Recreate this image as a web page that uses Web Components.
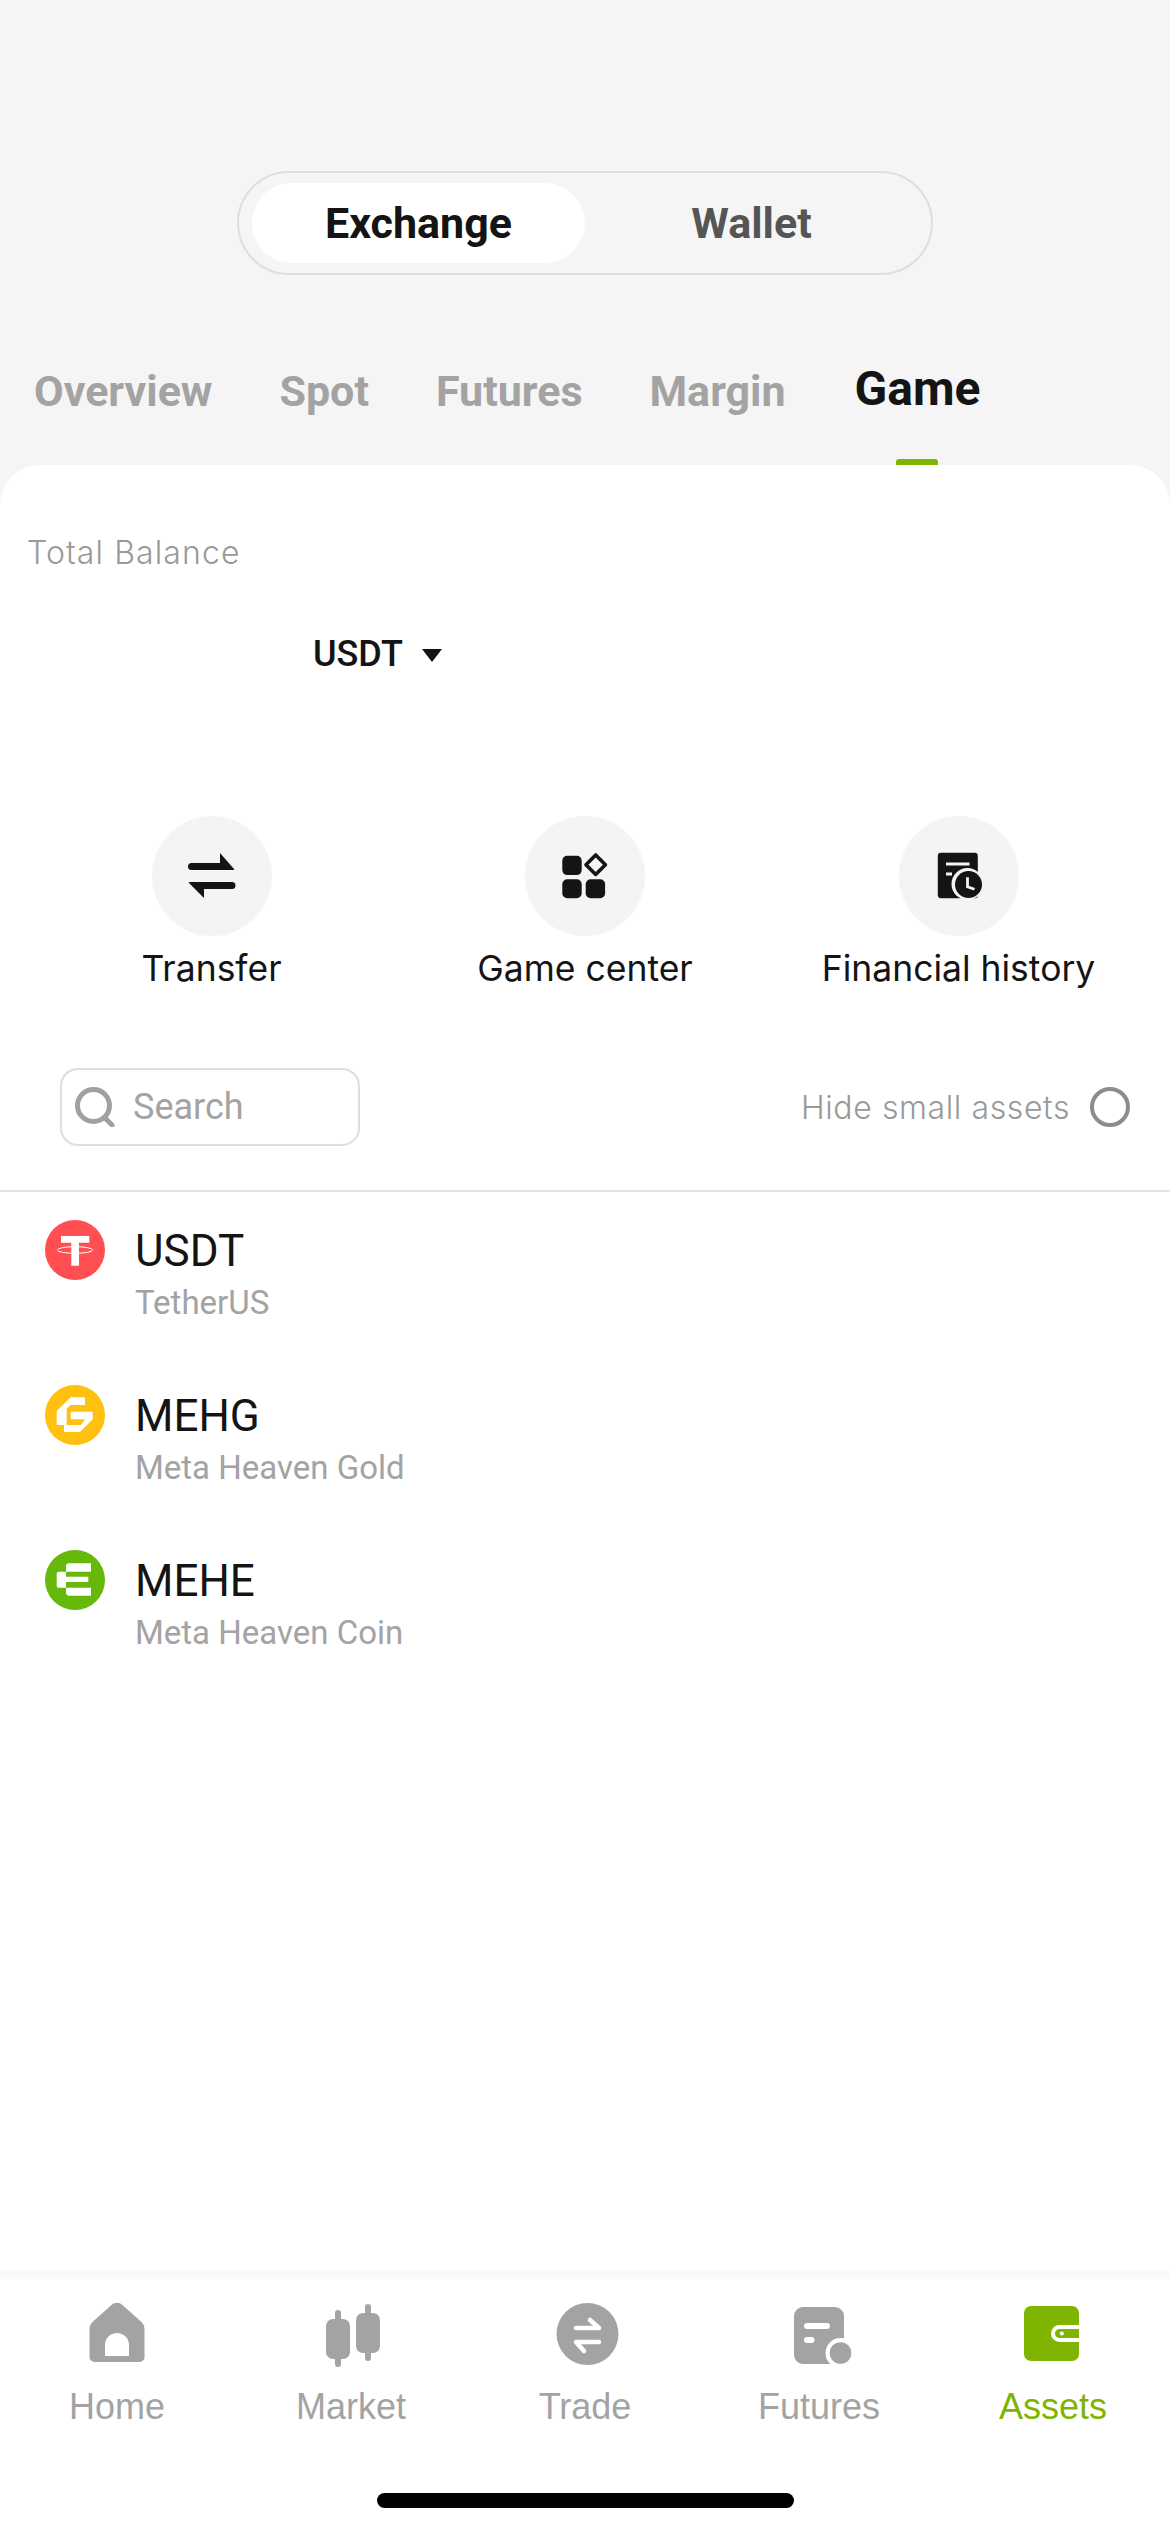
<!doctype html>
<html lang="en">
<head>
<meta charset="utf-8" />
<title>Assets</title>
<style>
  html, body { margin: 0; background: #f5f5f5; }
  body { width: 1170px; height: 2532px; overflow: hidden; font-family: Roboto, "Liberation Sans", sans-serif; }
  app-screen { height: 2532px; }
</style>
</head>
<body>
<template id="app-screen">
  <style>
    :host { display: flex; flex-direction: column; }
    .top { height: 465px; flex: none; display: flex; flex-direction: column; }
    .sheet { flex: 1; background: #fff; border-radius: 40px 40px 0 0; display: flex; flex-direction: column; }
  </style>
  <div class="top"><slot name="top"></slot></div>
  <div class="sheet"><slot></slot></div>
</template>

<template id="seg-switch">
  <style>
    :host { display: flex; width: 696px; height: 104px; box-sizing: border-box; margin: 171px auto 0; border: 2px solid #dedede; border-radius: 52px; padding: 10px 13px; font: 700 43px Roboto, sans-serif; }
    span { flex: 1; display: flex; align-items: center; justify-content: center; color: #555; border-radius: 41px; }
    .on { background: #fff; color: #141414; }
  </style>
  <span class="on">Exchange</span><span>Wallet</span>
</template>

<template id="tab-strip">
  <style>
    :host { display: flex; gap: 67px; padding-left: 34px; margin-top: 84px; height: 106px; font: 700 43px Roboto, sans-serif; color: #a3a3a3; }
    span { position: relative; line-height: 64px; white-space: nowrap; }
    .on { color: #141414; font-size: 48px; line-height: 60px; margin-left: 2px; }
    .on::after { content: ""; position: absolute; left: 50%; bottom: 0; width: 42px; height: 6px; margin-left: -21px; background: #7fb500; border-radius: 3px 3px 0 0; }
  </style>
  <span>Overview</span><span>Spot</span><span>Futures</span><span>Margin</span><span class="on">Game</span>
</template>

<template id="balance-head">
  <style>
    :host { display: block; padding: 69px 27px 0; height: 225px; box-sizing: border-box; }
    .label { font: 300 32px/38px Inter, Roboto, sans-serif; letter-spacing: 1.100px; color: #999; }
    .unit { display: flex; align-items: center; gap: 19px; margin: 61px 0 0 286px; font: 500 36px/42px Roboto, sans-serif; color: #141414; }
    svg { width: 20px; height: 13px; margin-top: 2px; }
  </style>
  <div class="label">Total Balance</div>
  <div class="unit">USDT <svg viewBox="0 0 20 13"><path d="M0 0h20L10 13z" fill="#141414"/></svg></div>
</template>

<template id="action-row">
  <style>
    :host { display: grid; grid-template-columns: repeat(3, 373.5px); justify-content: center; margin-top: 126px; }
  </style>
  <slot></slot>
</template>

<template id="action-item">
  <style>
    :host { display: flex; flex-direction: column; align-items: center; font: 400 35.500px/44px Inter, Roboto, sans-serif; color: #141414; white-space: nowrap; }
    .dot { width: 120px; height: 120px; border-radius: 50%; background: #f4f4f4; display: flex; align-items: center; justify-content: center; margin-bottom: 11px; }
    ::slotted(svg) { width: 60px; height: 60px; }
  </style>
  <div class="dot"><slot name="icon"></slot></div>
  <slot></slot>
</template>

<template id="filter-row">
  <style>
    :host { display: flex; align-items: center; justify-content: space-between; height: 78px; padding: 0 40px 0 60px; margin-top: 77px; margin-bottom: 44px; font: 300 32px Inter, Roboto, sans-serif; letter-spacing: .6px; color: #999; }
    .search { width: 300px; height: 78px; box-sizing: border-box; border: 2px solid #dedede; border-radius: 18px; display: flex; align-items: center; gap: 18px; padding-left: 13px; font: 400 36px Roboto, sans-serif; letter-spacing: 0; color: #a3a3a3; }
    .search svg { width: 40px; height: 40px; flex: none; }
    .hide { display: flex; align-items: center; gap: 20px; }
    .radio { width: 40px; height: 40px; box-sizing: border-box; border: 4px solid #8c8c8c; border-radius: 50%; }
  </style>
  <div class="search">
    <svg viewBox="0 0 40 40" fill="none" stroke="#a0a0a0" stroke-width="5" stroke-linecap="round"><circle cx="18.500" cy="18.500" r="16"/><path d="M31 32l6 6"/></svg>
    <span>Search</span>
  </div>
  <div class="hide"><span>Hide small assets</span><div class="radio"></div></div>
</template>

<template id="asset-list">
  <style>
    :host { display: block; border-top: 2px solid #e4e4e4; padding-top: 28px; }
  </style>
  <slot></slot>
</template>

<template id="asset-row">
  <style>
    :host { display: flex; height: 165px; padding-left: 45px; gap: 30px; box-sizing: border-box; }
    ::slotted(svg) { width: 60px; height: 60px; flex: none; }
    .name { font: 400 44px/52px Roboto, sans-serif; color: #141414; padding-top: 5px; }
    .sub { font: 400 33px/38px Roboto, sans-serif; color: #a3a3a3; margin-top: 7px; }
  </style>
  <slot name="icon"></slot>
  <div><div class="name"><slot name="name"></slot></div><div class="sub"><slot name="sub"></slot></div></div>
</template>

<template id="bottom-bar">
  <style>
    :host { display: block; margin-top: auto; height: 262px; box-sizing: border-box; border-top: 9px solid #fafafa; background: #fff; }
    .tabs { display: grid; grid-template-columns: repeat(5, 234px); padding-top: 23px; }
    .pill { width: 417px; height: 15px; border-radius: 8px; background: #000; margin: 66px auto 0 377px; }
  </style>
  <div class="tabs"><slot></slot></div>
  <div class="pill"></div>
</template>

<template id="bar-item">
  <style>
    :host { display: flex; flex-direction: column; align-items: center; font: 400 36px/40px "Liberation Sans", Arial, sans-serif; color: #a3a3a3; }
    :host([active]) { color: #7fb500; }
    ::slotted(svg) { width: 70px; height: 70px; margin-bottom: 15px; }
  </style>
  <slot name="icon"></slot>
  <slot></slot>
</template>

<app-screen>
  <seg-switch slot="top"></seg-switch>
  <tab-strip slot="top"></tab-strip>

  <balance-head></balance-head>

  <action-row>
    <action-item>
      <svg slot="icon" viewBox="0 0 60 60" fill="#141414"><path d="M9.500 17H38V7l14 16a.6.6 0 0 1-.5 1H9.500a3.500 3.500 0 0 1 0-7z"/><path d="M7.500 36H50a3.500 3.500 0 0 1 0 7H22v9L7 37a.6.6 0 0 1 .5-1z"/></svg>
      Transfer
    </action-item>
    <action-item>
      <svg slot="icon" viewBox="0 0 60 60" fill="#141414"><rect x="7.300" y="9.700" width="19.400" height="19.400" rx="5"/><rect x="7.300" y="33.300" width="19.400" height="19" rx="5"/><rect x="30.700" y="33.300" width="19.400" height="19" rx="5"/><path d="M40.700 9l9.700 9.700-9.700 9.700L31 18.700z" fill="none" stroke="#141414" stroke-width="3.600" stroke-linejoin="round"/></svg>
      Game center
    </action-item>
    <action-item>
      <svg slot="icon" viewBox="0 0 60 60"><rect x="8.800" y="6.700" width="40" height="45.600" rx="3" fill="#141414"/><path d="M17 18h23.500M17 28h6" stroke="#f4f4f4" stroke-width="2.800" fill="none"/><circle cx="38.500" cy="38" r="16" fill="#f4f4f4"/><circle cx="39.500" cy="38.500" r="13.500" fill="#141414"/><path d="M38.500 31.300v9.400l7 2.600" stroke="#f4f4f4" stroke-width="2.800" fill="none"/></svg>
      Financial history
    </action-item>
  </action-row>

  <filter-row></filter-row>

  <asset-list>
    <asset-row>
      <svg slot="icon" viewBox="0 0 60 60"><circle cx="30" cy="30" r="30" fill="#ff4f52"/><path d="M16 16h28.300v6.700H34v23h-7.700v-23H16z" fill="#fff"/><ellipse cx="30" cy="30" rx="17.700" ry="3.300" fill="none" stroke="#fff" stroke-width="1"/></svg>
      <span slot="name">USDT</span><span slot="sub">TetherUS</span>
    </asset-row>
    <asset-row>
      <svg slot="icon" viewBox="0 0 60 60"><circle cx="30" cy="30" r="30" fill="#ffc010"/><path fill="#fff" d="M25.700 12.300H40V20H25.500l-3.800 3.800V40H36l4-5.700H25.700v-7.600h22v7.600L35 47H19v-7h-7.300V26z"/></svg>
      <span slot="name">MEHG</span><span slot="sub">Meta Heaven Gold</span>
    </asset-row>
    <asset-row>
      <svg slot="icon" viewBox="0 0 60 60"><circle cx="30" cy="30" r="30" fill="#66b80b"/><path fill="#fff" d="M21 15l2-1.700h23v8.400H21zM13 21.700h8v16h-8l-1.300-1.300V23zM21 26.700h22.300V32H21zM21 37.700h25v8H23l-2-2z"/></svg>
      <span slot="name">MEHE</span><span slot="sub">Meta Heaven Coin</span>
    </asset-row>
  </asset-list>

  <bottom-bar>
    <bar-item>
      <svg slot="icon" viewBox="0 0 70 70" fill="#a3a3a3"><path fill-rule="evenodd" d="M29.500 3a8 8 0 0 1 11 0l19 17a9 9 0 0 1 3 6.500V55a5 5 0 0 1-5 5h-45a5 5 0 0 1-5-5V26.500a9 9 0 0 1 3-6.500zM23 54h24V43a12 12 0 0 0-24 0z"/></svg>
      Home
    </bar-item>
    <bar-item>
      <svg slot="icon" viewBox="0 0 70 70" fill="#a3a3a3"><rect x="10" y="17" width="24" height="40" rx="7"/><rect x="19" y="8" width="6" height="57" rx="3"/><rect x="40" y="11" width="24" height="40" rx="7"/><rect x="49" y="2" width="6" height="57" rx="3"/></svg>
      Market
    </bar-item>
    <bar-item>
      <svg slot="icon" viewBox="0 0 70 70" style="overflow:visible"><circle cx="37.500" cy="32" r="31" fill="#a3a3a3"/><path d="M26 26h23l-9-8M49 40H26l8 9" fill="none" stroke="#fff" stroke-width="4.500" stroke-linecap="round" stroke-linejoin="round"/></svg>
      Trade
    </bar-item>
    <bar-item>
      <svg slot="icon" viewBox="0 0 70 70"><rect x="10" y="5" width="50" height="57" rx="9" fill="#a3a3a3"/><path d="M23 24h20M23 38h4.500" stroke="#fff" stroke-width="6" stroke-linecap="round"/><circle cx="56.500" cy="51" r="15" fill="#fff"/><circle cx="56.500" cy="51" r="10.800" fill="#a3a3a3"/></svg>
      Futures
    </bar-item>
    <bar-item active>
      <svg slot="icon" viewBox="0 0 70 70"><rect x="6" y="4" width="55" height="55" rx="7" fill="#7fb500"/><path d="M61 25H41.500a6.500 6.500 0 0 0 0 13H61" fill="none" stroke="#fff" stroke-width="4"/><circle cx="43.800" cy="31.500" r="2" fill="#fff"/></svg>
      Assets
    </bar-item>
  </bottom-bar>
</app-screen>

<script>
  // every element is the same: clone its template into an open shadow root
  ["app-screen", "seg-switch", "tab-strip", "balance-head", "action-row", "action-item",
   "filter-row", "asset-list", "asset-row", "bottom-bar", "bar-item"].forEach((tag) => {
    customElements.define(tag, class extends HTMLElement {
      constructor() {
        super();
        const root = this.attachShadow({ mode: "open" });
        root.appendChild(document.getElementById(tag).content.cloneNode(true));
      }
    });
  });
</script>
</body>
</html>
